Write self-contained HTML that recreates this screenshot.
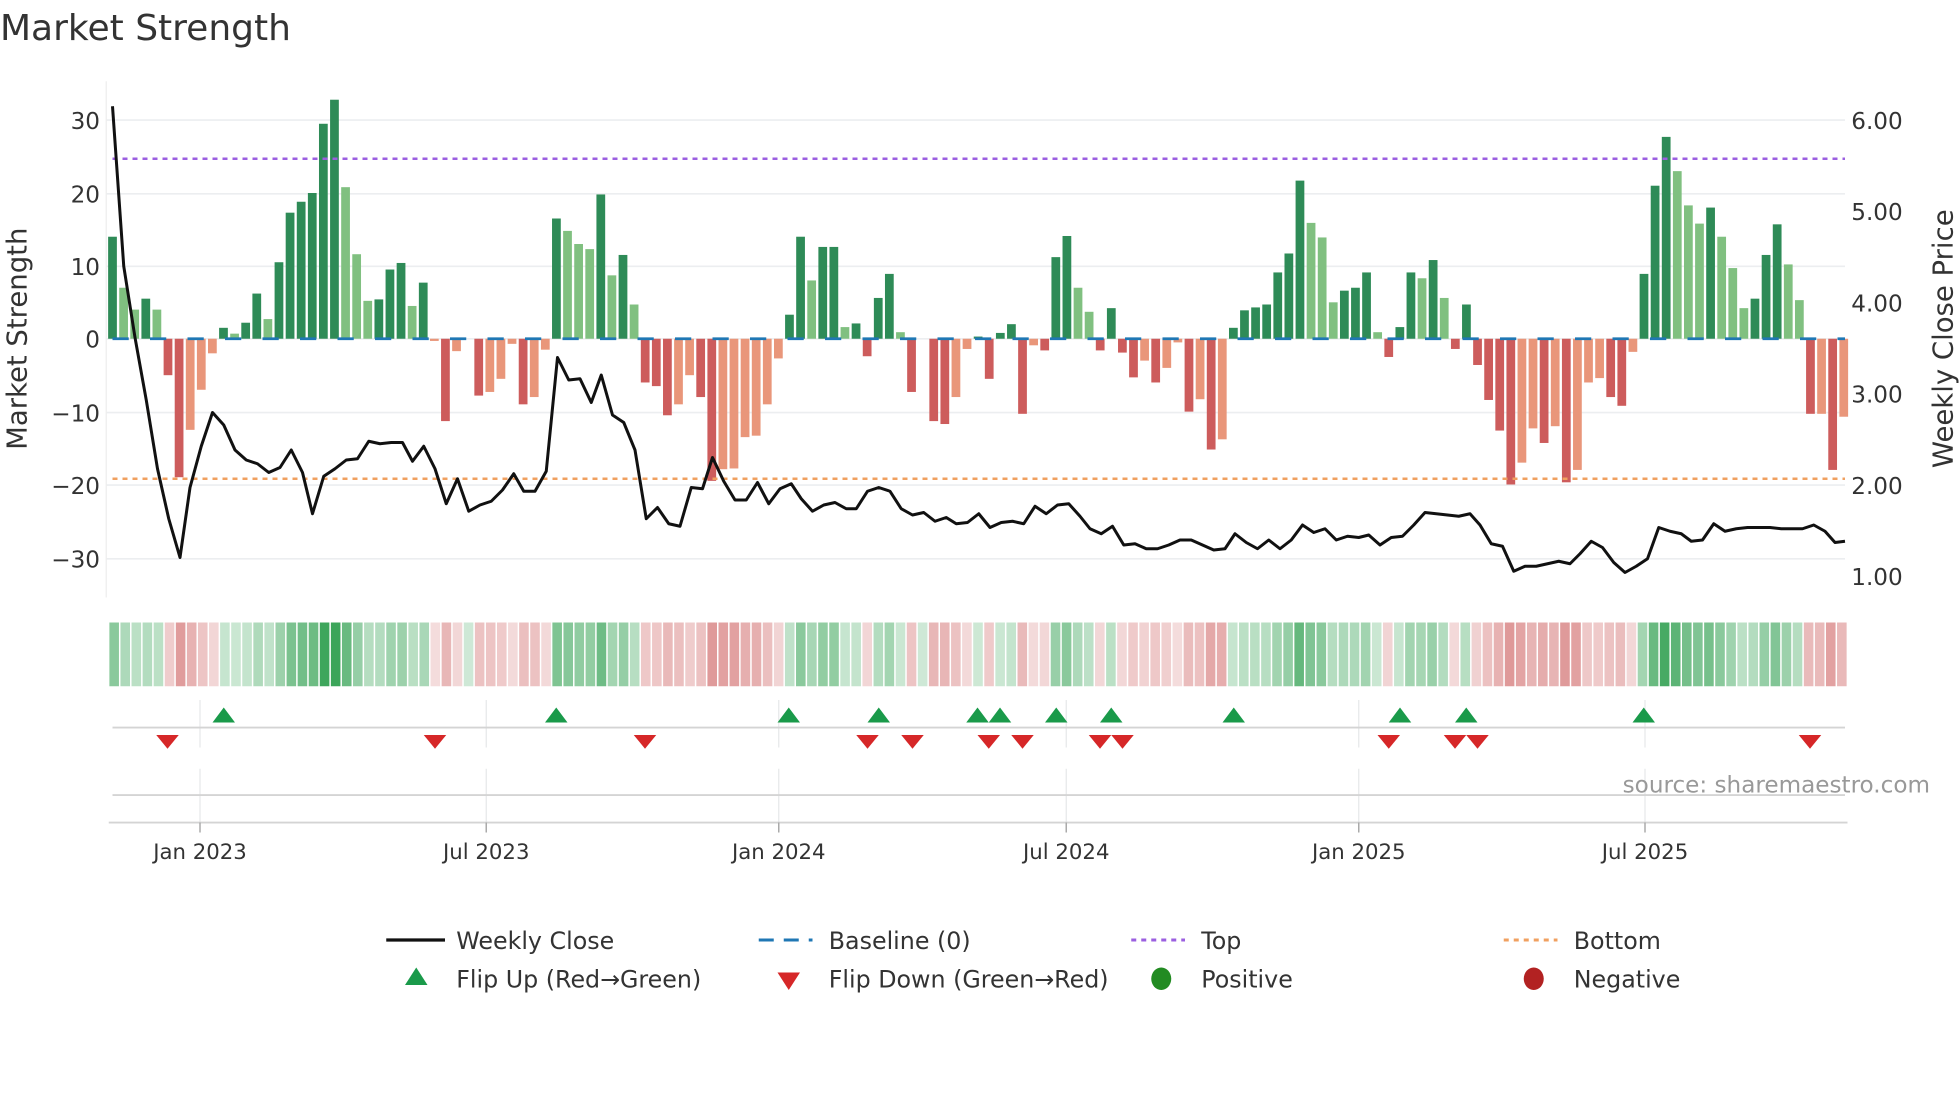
<!DOCTYPE html>
<html><head><meta charset="utf-8"><style>
html,body{margin:0;padding:0;background:#fff;width:1960px;height:1102px;overflow:hidden}
svg{display:block}
text{font-family:"DejaVu Sans","Liberation Sans",sans-serif;fill:#333}
</style></head><body>
<svg id="s" width="1960" height="1102" viewBox="0 0 1568 881.6" xmlns="http://www.w3.org/2000/svg">
<text x="0" y="32" font-size="28.8">Market Strength</text>
<g id="grid" stroke="#eceef0" stroke-width="1.3"></g>
<line x1="85" y1="65" x2="85" y2="478" stroke="#eee" stroke-width="1"/>
<g id="bars"></g>
<line x1="90" y1="271" x2="1476" y2="271" stroke="#1f77b4" stroke-width="2.2" stroke-dasharray="13 17"/>
<line x1="90" y1="127" x2="1476" y2="127" stroke="#9b5fe0" stroke-width="2" stroke-dasharray="4 4"/>
<line x1="90" y1="383" x2="1476" y2="383" stroke="#f0a060" stroke-width="2" stroke-dasharray="4 4"/>
<polyline id="price" fill="none" stroke="#111" stroke-width="2.4" stroke-linejoin="round"/>
<g font-size="18.5" text-anchor="end">
<text x="80" y="103">30</text><text x="80" y="162">20</text><text x="80" y="220">10</text><text x="80" y="278">0</text><text x="80" y="337">−10</text><text x="80" y="395">−20</text><text x="80" y="454">−30</text>
</g>
<g font-size="18.5">
<text x="1481" y="103">6.00</text><text x="1481" y="176">5.00</text><text x="1481" y="249">4.00</text><text x="1481" y="322">3.00</text><text x="1481" y="395">2.00</text><text x="1481" y="468">1.00</text>
</g>
<text transform="translate(21,271) rotate(-90)" font-size="22" text-anchor="middle">Market Strength</text>
<text transform="translate(1562,271) rotate(-90)" font-size="22" text-anchor="middle">Weekly Close Price</text>
<g id="heat"></g>
<g stroke="#e6e8ea" stroke-width="1">
<line x1="160" y1="560" x2="160" y2="598"/><line x1="389" y1="560" x2="389" y2="598"/><line x1="623" y1="560" x2="623" y2="598"/><line x1="853" y1="560" x2="853" y2="598"/><line x1="1087" y1="560" x2="1087" y2="598"/><line x1="1316" y1="560" x2="1316" y2="598"/>
<line x1="160" y1="615" x2="160" y2="658"/><line x1="389" y1="615" x2="389" y2="658"/><line x1="623" y1="615" x2="623" y2="658"/><line x1="853" y1="615" x2="853" y2="658"/><line x1="1087" y1="615" x2="1087" y2="658"/><line x1="1316" y1="615" x2="1316" y2="658"/>
</g>
<line x1="90" y1="582" x2="1476" y2="582" stroke="#d4d4d4" stroke-width="1.5"/>
<line x1="90" y1="636" x2="1476" y2="636" stroke="#d4d4d4" stroke-width="1.5"/>
<line x1="87" y1="658" x2="1478" y2="658" stroke="#d4d4d4" stroke-width="1.5"/>
<g id="marks"></g>
<g stroke="#aaa" stroke-width="1.2">
<line x1="160" y1="658" x2="160" y2="666"/><line x1="389" y1="658" x2="389" y2="666"/><line x1="623" y1="658" x2="623" y2="666"/><line x1="853" y1="658" x2="853" y2="666"/><line x1="1087" y1="658" x2="1087" y2="666"/><line x1="1316" y1="658" x2="1316" y2="666"/>
</g>
<g font-size="17" text-anchor="middle">
<text x="160" y="687">Jan 2023</text><text x="389" y="687">Jul 2023</text><text x="623" y="687">Jan 2024</text><text x="853" y="687">Jul 2024</text><text x="1087" y="687">Jan 2025</text><text x="1316" y="687">Jul 2025</text>
</g>
<text x="1544" y="634" font-size="18.5" text-anchor="end" style="fill:#999">source: sharemaestro.com</text>
<g font-size="19">
<line x1="309" y1="752" x2="356" y2="752" stroke="#111" stroke-width="2.6"/><text x="365" y="759">Weekly Close</text>
<line x1="607" y1="752" x2="650" y2="752" stroke="#1f77b4" stroke-width="2.4" stroke-dasharray="12 8"/><text x="663" y="759">Baseline (0)</text>
<line x1="905" y1="752" x2="948" y2="752" stroke="#9b5fe0" stroke-width="2.4" stroke-dasharray="4 4"/><text x="961" y="759">Top</text>
<line x1="1203" y1="752" x2="1246" y2="752" stroke="#f0a060" stroke-width="2.4" stroke-dasharray="4 4"/><text x="1259" y="759">Bottom</text>
<polygon points="333,774 324,788 342,788" fill="#1a9a4a"/><text x="365" y="790">Flip Up (Red→Green)</text>
<polygon points="622,778 640,778 631,792" fill="#d62728"/><text x="663" y="790">Flip Down (Green→Red)</text>
<ellipse cx="929" cy="783" rx="8" ry="9" fill="#228b22"/><text x="961" y="790">Positive</text>
<ellipse cx="1227" cy="783" rx="8" ry="9" fill="#b22222"/><text x="1259" y="790">Negative</text>
</g>
</svg>
<script>
var D="14d 7l 4l 5.5d 4l -5d -19d -12.5l -7l -2l 1.5d 0.7l 2.2d 6.2d 2.7l 10.5d 17.3d 18.8d 20d 29.5d 32.8d 20.8l 11.6l 5.2l 5.4d 9.5d 10.4d 4.5l 7.7d -0.3l -11.3d -1.7l 0l -7.8d -7.3l -5.5l -0.7l -9d -8l -1.5l 16.5d 14.8l 13l 12.3l 19.8d 8.7l 11.5d 4.7l -6d -6.5d -10.5d -9l -5l -8d -19.5d -17.9l -17.8l -13.5l -13.3l -9l -2.7l 3.3d 14d 8l 12.6d 12.6d 1.6l 2.1d -2.4d 5.6d 8.9d 0.9l -7.3d 0l -11.3d -11.7d -8l -1.4l 0.3d -5.5d 0.8d 2d -10.3d -0.9l -1.6d 11.2d 14.1d 7l 3.7l -1.6d 4.2d -1.9d -5.3d -3l -6d -4l -0.5l -10d -8.3l -15.2d -13.8l 1.5d 3.9d 4.3d 4.7d 9.1d 11.7d 21.7d 15.9l 13.9l 5l 6.6d 7d 9.1d 0.9l -2.5d 1.6d 9.1d 8.3l 10.8d 5.6l -1.4d 4.7d -3.6d -8.4d -12.6d -20d -17l -12.3l -14.3d -12l -19.7d -18l -6l -5.4l -8d -9.2d -1.8l 8.9d 21d 27.7d 23l 18.3l 15.8l 18d 14l 9.7l 4.2l 5.5d 11.5d 15.7d 10.2l 5.3l -10.3d -10.3l -18d -10.7l".split(" ");
var NS="http://www.w3.org/2000/svg";
function el(t,a,p){var e=document.createElementNS(NS,t);for(var k in a)e.setAttribute(k,a[k]);document.getElementById(p).appendChild(e);return e;}
[96,155,213,271,330,388,447].forEach(function(y){el("line",{x1:85,x2:1476,y1:y,y2:y},"grid");});
var n=D.length,x0=90,st=(1475-90)/(n-1);
D.forEach(function(s,i){var v=parseFloat(s),d=s.slice(-1)=="d";var x=x0+i*st;
 var c=v>=0?(d?"#2e8b57":"#80c080"):(d?"#cd5c5c":"#e9967a");
 var h=Math.abs(v)*5.83;
 if(h>0.3)el("rect",{x:x-3.5,y:v>=0?271-h:271,width:7,height:h,fill:c},"bars");
 var a=Math.min(1,0.25+Math.abs(v)/30*0.75);
 var hc=v>=0?"rgba(60,165,90,"+a.toFixed(2)+")":"rgba(205,95,95,"+(a*0.85).toFixed(2)+")";
 var hx=87+i*(1478-87)/n;
 el("rect",{x:hx+0.5,y:498,width:(1478-87)/n-1.2,height:51,fill:hc},"heat");
});
var P="90,85 99,213 108,270 117,320 126,375 135,415 144,446 152,390 161,357 170,330 179,340 188,360 197,368 206,371 215,378 224,374 233,360 242,378 250,411 259,381 268,375 277,368 286,367 295,353 304,355 313,354 322,354 330,369 339,357 348,375 357,403 366,383 375,409 384,404 393,401 402,392 411,379 419,393 428,393 437,377 446,286 455,304 464,303 473,322 481,300 490,332 499,338 508,360 517,415 526,406 535,419 544,421 553,390 562,391 570,366 579,385 588,400 597,400 606,386 615,403 624,391 633,387 641,399 650,409 659,404 668,402 677,407 685,407 694,393 703,390 712,393 721,407 730,412 739,410 748,417 757,414 765,419 774,418 783,411 792,422 801,418 810,417 819,419 828,405 837,411 846,404 855,403 864,413 872,423 881,427 890,421 899,436 908,435 917,439 926,439 935,436 944,432 953,432 962,436 971,440 980,439 988,427 997,434 1006,439 1015,432 1024,439 1033,432 1042,420 1051,426 1060,423 1069,432 1078,429 1087,430 1095,428 1104,436 1113,430 1122,429 1131,420 1140,410 1149,411 1158,412 1167,413 1176,411 1184,420 1193,435 1202,437 1211,457 1220,453 1229,453 1238,451 1247,449 1256,451 1264,443 1273,433 1282,438 1291,450 1300,458 1309,453 1318,447 1327,422 1336,425 1345,427 1353,433 1362,432 1371,419 1380,425 1389,423 1398,422 1407,422 1416,422 1425,423 1434,423 1442,423 1451,420 1460,425 1468,434 1476,433";
document.getElementById("price").setAttribute("points",P);
[179,445,631,703,782,800,845,889,987,1120,1173,1315].forEach(function(x){el("polygon",{points:x+",566 "+(x-9)+",578 "+(x+9)+",578",fill:"#1a9a4a"},"marks");});
[134,348,516,694,730,791,818,880,898,1111,1164,1182,1448].forEach(function(x){el("polygon",{points:(x-9)+",588 "+(x+9)+",588 "+x+",599",fill:"#d62728"},"marks");});
</script>
</body></html>
